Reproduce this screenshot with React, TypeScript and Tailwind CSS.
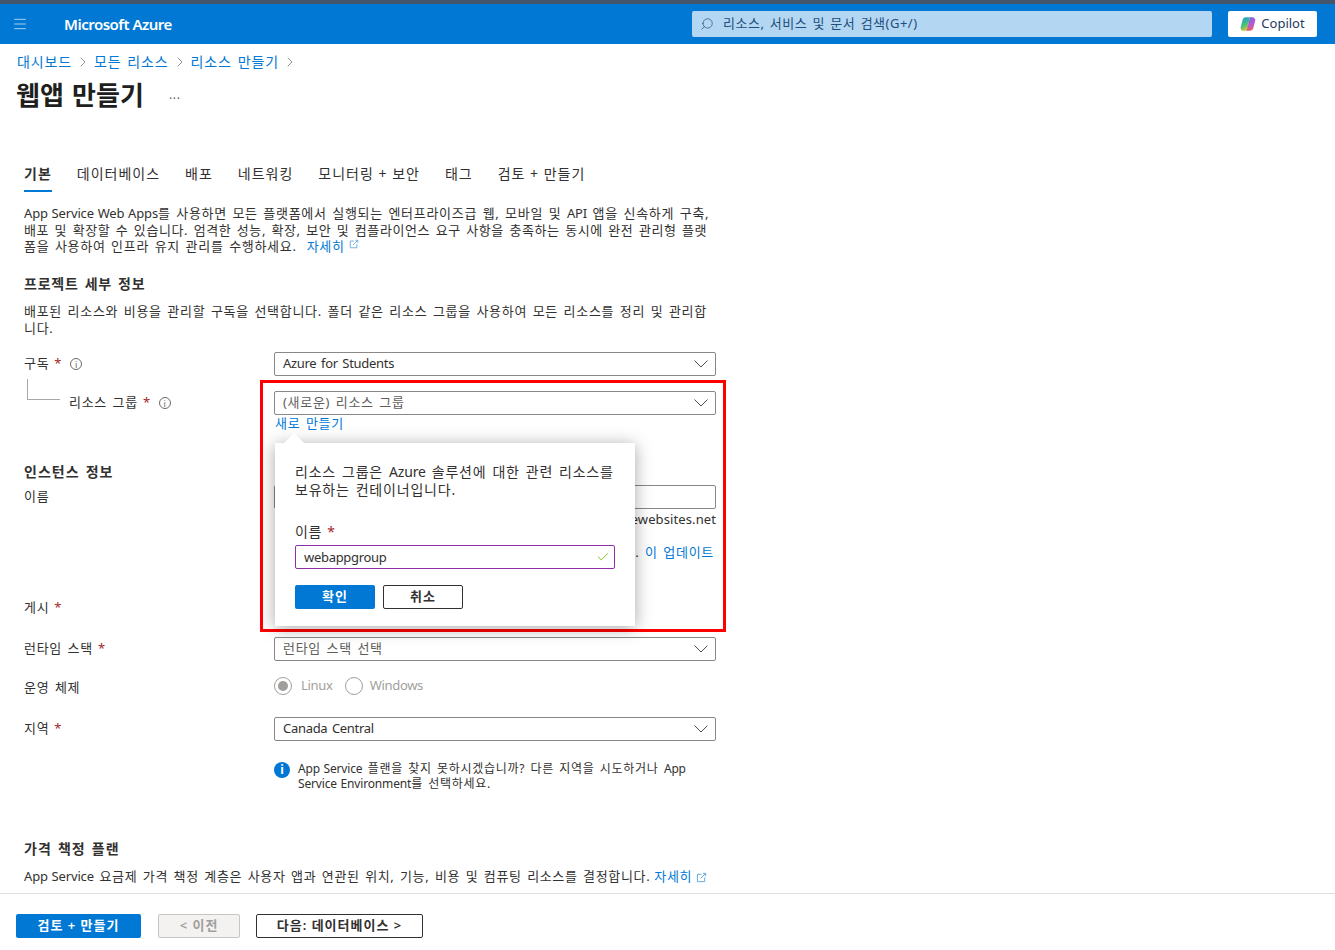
import { ChevronRight, Check, Menu, Search } from "lucide-react";
import type { ReactNode } from "react";

const font = { fontFamily: '"Noto Sans", "Noto Sans CJK KR", sans-serif' };

// latin runs sit tighter than the hangul around them
function L({ children }: { children: ReactNode }) {
  return <span className="tracking-[-0.15px] [word-spacing:0.5px]">{children}</span>;
}

function Req() {
  return <span className="text-[#a4262c] ml-[5px]">*</span>;
}

function InfoDot() {
  return (
    <span className="ml-[8px] inline-flex w-[12px] h-[12px] rounded-full border border-[#6b6b6b] text-[#6b6b6b] text-[9px] leading-none items-center justify-center tracking-normal">
      i
    </span>
  );
}

function ExtLink({ className }: { className?: string }) {
  return (
    <svg viewBox="0 0 12 12" className={className} fill="none" stroke="#5ba3dc" strokeWidth="1">
      <path d="M6 2.5H1.5v8h8V6" />
      <path d="M5 7l5.5-5.5M7.5 1.5h3v3" />
    </svg>
  );
}

function Select({ value, muted }: { value: ReactNode; muted?: boolean }) {
  return (
    <div className="h-[24px] w-[442px] rounded-[2px] border border-[#8a8886] bg-white flex items-center justify-between pl-[8px] pr-[7px]">
      <span className={`pt-[1px] ${muted ? "text-[#605e5c]" : "text-[#323130]"}`}>{value}</span>
      <svg viewBox="0 0 14 8" className="w-[14px] h-[8px]" fill="none" stroke="#505050" strokeWidth="1">
        <path d="M0.5 0.5L7 7L13.5 0.5" />
      </svg>
    </div>
  );
}

function Row({ label, children, className }: { label: ReactNode; children: ReactNode; className?: string }) {
  return (
    <div className={`grid grid-cols-[250px_442px] items-start ${className || ""}`}>
      <div className="text-[#323130] leading-[22px]">{label}</div>
      <div>{children}</div>
    </div>
  );
}

function CopilotMark() {
  return (
    <svg viewBox="0 0 16 16" className="w-[16px] h-[16px]">
      <defs>
        <linearGradient id="cpa" x1="0.2" y1="0" x2="0.6" y2="1">
          <stop offset="0" stopColor="#1f9be0" />
          <stop offset="0.55" stopColor="#43c07a" />
          <stop offset="1" stopColor="#f4c430" />
        </linearGradient>
        <linearGradient id="cpb" x1="0.4" y1="0" x2="0.7" y2="1">
          <stop offset="0" stopColor="#7a6ae0" />
          <stop offset="0.6" stopColor="#c158c8" />
          <stop offset="1" stopColor="#f0683c" />
        </linearGradient>
      </defs>
      <path d="M5.5 1.2h4.5L7 14.8H3.4C1.4 14.8 0.2 13 0.7 11.2L2.6 4C3.1 2.2 4 1.2 5.5 1.2z" fill="url(#cpa)" />
      <path d="M10 1.2h2.4c2 0 3.3 1.8 2.8 3.6l-1.9 7.2c-.5 1.8-1.6 2.8-3.1 2.8H6.6L10 1.2z" fill="url(#cpb)" />
    </svg>
  );
}

export default function App() {
  return (
    <div style={font} className="relative h-[950px] w-[1335px] overflow-hidden bg-white text-[13px] text-[#323130] flex flex-col tracking-[0.7px] [word-spacing:1.5px]">
      <div className="h-[4px] bg-[#45566b]" />
      <header className="h-[40px] bg-[#0078d4] flex items-center shrink-0">
        <Menu className="ml-[12px] w-[16px] h-[16px] text-[#a6d0f0]" strokeWidth={1.5} />
        <span className="ml-[36px] w-[108px] whitespace-nowrap text-[15px] font-semibold text-white tracking-[-0.5px] [word-spacing:0]">Microsoft Azure</span>
        <div className="ml-[520px] w-[520px] h-[26px] rounded-[2px] bg-[#b3d6f2] flex items-center pl-[8px] text-[#1d4f7c]">
          <Search className="w-[14px] h-[14px] -scale-x-100" strokeWidth={1.2} />
          <span className="ml-[9px] text-[13px] tracking-[0.5px]">리소스, 서비스 및 문서 검색(G+/)</span>
        </div>
        <div className="ml-[16px] w-[89px] h-[26px] rounded-[2px] bg-white flex items-center justify-center gap-[5px]">
          <CopilotMark />
          <span className="text-[#243a5e] text-[13px] tracking-normal">Copilot</span>
        </div>
      </header>

      <main className="flex-1 overflow-hidden">
        <nav className="mt-[8px] ml-[17px] flex items-center h-[19px] text-[#0078d4] text-[14px] tracking-[0.85px]">
          <span>대시보드</span>
          <ChevronRight className="mx-[3px] w-[16px] h-[16px] text-[#605e5c]" strokeWidth={1} />
          <span>모든 리소스</span>
          <ChevronRight className="mx-[3px] w-[16px] h-[16px] text-[#605e5c]" strokeWidth={1} />
          <span>리소스 만들기</span>
          <ChevronRight className="mx-[3px] w-[16px] h-[16px] text-[#605e5c]" strokeWidth={1} />
        </nav>
        <div className="mt-[6px] ml-[16px] flex items-center h-[36px]">
          <h1 className="text-[26px] font-semibold text-[#201f1e] tracking-[0]">웹앱 만들기</h1>
          <span className="ml-[25px] text-[#605e5c] text-[12px]">...</span>
        </div>

        <div className="mt-[51px] ml-[24px] flex gap-[25px] h-[28px] text-[14px] text-[#323130] tracking-[1px] [word-spacing:0]">
          <div className="h-[28px] border-b-[2px] border-[#0078d4] font-semibold leading-[20px]">기본</div>
          <div className="leading-[20px]">데이터베이스</div>
          <div className="leading-[20px]">배포</div>
          <div className="leading-[20px]">네트워킹</div>
          <div className="leading-[20px]">모니터링 + 보안</div>
          <div className="leading-[20px]">태그</div>
          <div className="leading-[20px]">검토 + 만들기</div>
        </div>

        <div className="ml-[24px] w-[692px]">
          <p className="mt-[13px] leading-[16.5px] whitespace-nowrap">
            <L>App Service Web Apps</L>를 사용하면 모든 플랫폼에서 실행되는 엔터프라이즈급 웹, 모바일 및 <L>API</L> 앱을 신속하게 구축,
            <br />
            <span className="tracking-[0.6px]">배포 및 확장할 수 있습니다. 엄격한 성능, 확장, 보안 및 컴플라이언스 요구 사항을 충족하는 동시에 완전 관리형 플랫</span>
            <br />
            폼을 사용하여 인프라 유지 관리를 수행하세요.
            <span className="ml-[10px] text-[#0078d4]">자세히</span>
            <ExtLink className="inline-block ml-[4px] -mt-[8px] w-[10px] h-[10px]" />
          </p>

          <h2 className="mt-[19px] text-[14px] font-semibold leading-[20px] text-[#323130] tracking-[0.8px]">프로젝트 세부 정보</h2>
          <p className="mt-[9px] leading-[17px] whitespace-nowrap">
            배포된 리소스와 비용을 관리할 구독을 선택합니다. 폴더 같은 리소스 그룹을 사용하여 모든 리소스를 정리 및 관리합
            <br />
            니다.
          </p>

          <Row className="mt-[15px]" label={<span>구독<Req /><InfoDot /></span>}>
            <Select value={<span className="tracking-[-0.3px]">Azure for Students</span>} />
          </Row>
          <Row
            className="mt-[15px]"
            label={
              <div className="relative pl-[45px]">
                <span className="absolute left-[3px] -top-[12px] w-[33px] h-[21px] border-l border-b border-[#a8a8a8]" />
                리소스 그룹<Req /><InfoDot />
              </div>
            }
          >
            <Select value="(새로운) 리소스 그룹" muted />
            <div className="text-[#0078d4] leading-[18px] -mt-[1px] ml-[1px]">새로 만들기</div>
          </Row>

          <h2 className="mt-[30px] text-[14px] font-semibold leading-[20px] tracking-[1px]">인스턴스 정보</h2>
          <Row className="mt-[3px]" label="이름">
            <div className="h-[24px] rounded-[2px] border border-[#8a8886]" />
            <div className="text-right leading-[20px] tracking-[0.1px]">.azurewebsites.net</div>
            <div className="mt-[13px] text-right leading-[20px] pr-[2px]">
              . <span className="text-[#0078d4]">이 업데이트</span>
            </div>
          </Row>
          <Row className="mt-[34px]" label={<span>게시<Req /></span>}>
            <div className="h-[24px]" />
          </Row>
          <Row className="mt-[17px]" label={<span>런타임 스택<Req /></span>}>
            <Select value="런타임 스택 선택" muted />
          </Row>
          <Row className="mt-[15px]" label="운영 체제">
            <div className="flex items-center h-[20px] text-[#a19f9d] tracking-[-0.3px]">
              <span className="w-[18px] h-[18px] rounded-full border border-[#a19f9d] flex items-center justify-center">
                <span className="w-[10px] h-[10px] rounded-full bg-[#a19f9d]" />
              </span>
              <span className="ml-[9px]">Linux</span>
              <span className="ml-[12px] w-[18px] h-[18px] rounded-full border border-[#a19f9d]" />
              <span className="ml-[7px]">Windows</span>
            </div>
          </Row>
          <Row className="mt-[19px]" label={<span>지역<Req /></span>}>
            <Select value={<span className="tracking-[-0.3px]">Canada Central</span>} />
            <div className="mt-[20px] flex items-start">
              <span className="w-[16px] h-[16px] mt-[1px] rounded-full bg-[#0078d4] text-white text-[12px] font-bold flex items-center justify-center shrink-0 tracking-normal">
                i
              </span>
              <p className="ml-[8px] text-[12px] leading-[15px] whitespace-nowrap">
                <L>App Service</L> 플랜을 찾지 못하시겠습니까? 다른 지역을 시도하거나 <L>App</L>
                <br />
                <L>Service Environment</L>를 선택하세요.
              </p>
            </div>
          </Row>

          <h2 className="mt-[48px] text-[14px] font-semibold leading-[20px] tracking-[1px]">가격 책정 플랜</h2>
          <p className="mt-[9px] leading-[17px] whitespace-nowrap tracking-[0.65px]">
            <L>App Service</L> 요금제 가격 책정 계층은 사용자 앱과 연관된 위치, 기능, 비용 및 컴퓨팅 리소스를 결정합니다.
            <span className="ml-[4px] text-[#0078d4]">자세히</span>
            <ExtLink className="inline-block ml-[4px] w-[11px] h-[11px]" />
          </p>
        </div>
      </main>

      <footer className="h-[57px] shrink-0 border-t border-[#e1dfdd] bg-white flex items-start pl-[16px] pt-[20px] font-semibold tracking-[1px] [word-spacing:0]">
        <button className="w-[125px] h-[24px] rounded-[2px] bg-[#0078d4] text-white">검토 + 만들기</button>
        <button className="ml-[17px] w-[82px] h-[24px] rounded-[2px] border border-[#c8c6c4] bg-[#f3f2f1] text-[#a19f9d]">&lt; 이전</button>
        <button className="ml-[16px] w-[167px] h-[24px] rounded-[2px] border border-[#323130] text-[#323130]">다음: 데이터베이스 &gt;</button>
      </footer>

      {/* annotation + callout lie over the form */}
      <div className="absolute left-[260px] top-[380px] w-[466px] h-[252px] border-[3px] border-[#ff0000] pointer-events-none" />
      <div className="absolute left-[275px] top-[443px] w-[360px] h-[183px] bg-white shadow-[0_2px_16px_rgba(0,0,0,0.35)] px-[20px] pt-[20px]">
        <span className="absolute left-[12px] -top-[7px] w-[14px] h-[14px] rotate-45 bg-white" />
        <p className="relative text-[14px] leading-[18px] text-[#323130] whitespace-nowrap tracking-[0.8px]">
          리소스 그룹은 <L>Azure</L> 솔루션에 대한 관련 리소스를
          <br />
          보유하는 컨테이너입니다.
        </p>
        <div className="mt-[24px] leading-[18px] text-[14px]">이름<Req /></div>
        <div className="mt-[4px] h-[24px] border border-[#8e2fa8] rounded-[2px] flex items-center justify-between pl-[8px] pr-[4px]">
          <span className="tracking-[-0.3px] pt-[1px]">webappgroup</span>
          <Check className="w-[14px] h-[14px] text-[#6bb700]" strokeWidth={1.5} />
        </div>
        <div className="mt-[16px] flex gap-[8px] font-semibold">
          <button className="w-[80px] h-[24px] rounded-[2px] bg-[#0078d4] text-white tracking-[1px]">확인</button>
          <button className="w-[80px] h-[24px] rounded-[2px] border border-[#323130] text-[#323130] tracking-[1px]">취소</button>
        </div>
      </div>
    </div>
  );
}
